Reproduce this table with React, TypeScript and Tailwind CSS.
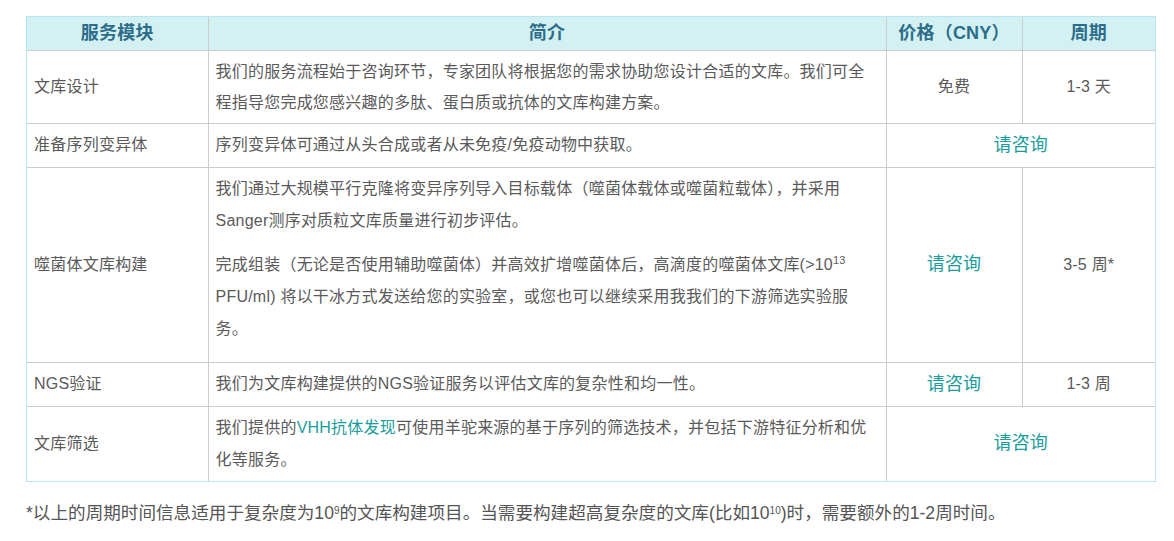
const font = { fontFamily: '"Liberation Sans", "Noto Sans CJK SC", sans-serif' };

const th = "h-[33px] border-r border-b border-[#cccccc] text-center text-[18px] font-bold text-[#2c6d8a] leading-[32px]";
const cell = "border-r border-b border-[#cccccc] align-middle";
const td = `${cell} px-[7px] py-[5px] leading-[32px]`;
const desc = `${cell} pl-[7px] pr-[12px] py-[5px] leading-[32px]`;
const tdTight = `${cell} px-[7px] py-[5px] leading-[31px]`;
const descTight = `${cell} pl-[7px] pr-[12px] py-[5px] leading-[31px]`;
const link = "text-[18px] text-[#1a9d9b]";

export default function App() {
  return (
    <div className="min-h-screen bg-white pl-[26px] pt-[16px] text-[16px] text-[#5a5a5a]" style={font}>
      <div className="w-[1130px] border border-[#b8e7f0]">
        <table className="w-full table-fixed border-collapse tracking-[0.225px]">
          <colgroup>
            <col className="w-[181px]" />
            <col className="w-[678px]" />
            <col className="w-[136px]" />
            <col />
          </colgroup>
          <thead>
            <tr className="bg-[#d3f1f2]">
              <th className={th}>服务模块</th>
              <th className={th}>简介</th>
              <th className={th}>价格（CNY）</th>
              <th className={`${th} border-r-0`}>周期</th>
            </tr>
          </thead>
          <tbody>
            <tr>
              <td className={tdTight}>文库设计</td>
              <td className={descTight}>
                我们的服务流程始于咨询环节，专家团队将根据您的需求协助您设计合适的文库。我们可全程指导您完成您感兴趣的多肽、蛋白质或抗体的文库构建方案。
              </td>
              <td className={`${tdTight} text-center`}>免费</td>
              <td className={`${tdTight} border-r-0 text-center`}>1-3 天</td>
            </tr>
            <tr>
              <td className={td}>准备序列变异体</td>
              <td className={desc}>序列变异体可通过从头合成或者从未免疫/免疫动物中获取。</td>
              <td colSpan={2} className={`${td} border-r-0 text-center`}>
                <span className={link}>请咨询</span>
              </td>
            </tr>
            <tr>
              <td className={td}>噬菌体文库构建</td>
              <td className={desc}>
                <p className="mb-[12px]">
                  我们通过大规模平行克隆将变异序列导入目标载体（噬菌体载体或噬菌粒载体），并采用Sanger测序对质粒文库质量进行初步评估。
                </p>
                <p className="mb-[12px]">
                  完成组装（无论是否使用辅助噬菌体）并高效扩增噬菌体后，高滴度的噬菌体文库(&gt;10
                  <sup className="text-[11px]">13</sup> PFU/ml) 将以干冰方式发送给您的实验室，或您也可以继续采用我我们的下游筛选实验服务。
                </p>
              </td>
              <td className={`${td} text-center`}>
                <span className={link}>请咨询</span>
              </td>
              <td className={`${td} border-r-0 text-center`}>3-5 周*</td>
            </tr>
            <tr>
              <td className={td}>NGS验证</td>
              <td className={desc}>我们为文库构建提供的NGS验证服务以评估文库的复杂性和均一性。</td>
              <td className={`${td} text-center`}>
                <span className={link}>请咨询</span>
              </td>
              <td className={`${td} border-r-0 text-center`}>1-3 周</td>
            </tr>
            <tr>
              <td className={`${td} border-b-0`}>文库筛选</td>
              <td className={`${desc} border-b-0`}>
                我们提供的<span className="text-[#1a9d9b]">VHH抗体发现</span>可使用羊驼来源的基于序列的筛选技术，并包括下游特征分析和优化等服务。
              </td>
              <td colSpan={2} className={`${td} border-b-0 border-r-0 text-center`}>
                <span className={link}>请咨询</span>
              </td>
            </tr>
          </tbody>
        </table>
      </div>
      <p className="mt-[18px] text-[17.6px] leading-[26px] text-[#555555]">
        *以上的周期时间信息适用于复杂度为10<sup className="text-[10px]">9</sup>的文库构建项目。当需要构建超高复杂度的文库(比如10
        <sup className="text-[10px]">10</sup>)时，需要额外的1-2周时间。
      </p>
    </div>
  );
}
